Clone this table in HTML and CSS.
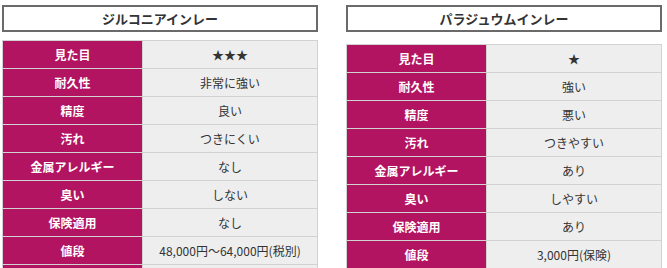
FILE: index.html
```html
<!DOCTYPE html>
<html lang="ja">
<head>
<meta charset="utf-8">
<link rel="stylesheet" href="styles.css">
</head>
<body>
<div class="wrap">
  <section class="col col-left">
    <h2 class="title">ジルコニアインレー</h2>
    <table class="spec">
      <tr><th>見た目</th><td>★★★</td></tr>
      <tr><th>耐久性</th><td>非常に強い</td></tr>
      <tr><th>精度</th><td>良い</td></tr>
      <tr><th>汚れ</th><td>つきにくい</td></tr>
      <tr><th>金属アレルギー</th><td>なし</td></tr>
      <tr><th>臭い</th><td>しない</td></tr>
      <tr><th>保険適用</th><td>なし</td></tr>
      <tr><th>値段</th><td>48,000円～64,000円(税別)</td></tr>
      <tr><th>&nbsp;</th><td>&nbsp;</td></tr>
    </table>
  </section>
  <section class="col col-right">
    <h2 class="title">パラジュウムインレー</h2>
    <table class="spec">
      <tr><th>見た目</th><td>★</td></tr>
      <tr><th>耐久性</th><td>強い</td></tr>
      <tr><th>精度</th><td>悪い</td></tr>
      <tr><th>汚れ</th><td>つきやすい</td></tr>
      <tr><th>金属アレルギー</th><td>あり</td></tr>
      <tr><th>臭い</th><td>しやすい</td></tr>
      <tr><th>保険適用</th><td>あり</td></tr>
      <tr><th>値段</th><td>3,000円(保険)</td></tr>
      <tr><th>&nbsp;</th><td>&nbsp;</td></tr>
    </table>
  </section>
</div>
</body>
</html>
```

FILE: styles.css
```css
html, body {
  margin: 0;
  padding: 0;
  background: #ffffff;
  overflow: hidden;
}
body {
  font-family: "Noto Sans CJK JP", "Noto Sans", sans-serif;
  color: #333333;
}
.wrap {
  display: flex;
  gap: 28px;
  padding: 5px 0 0 2px;
}
.col {
  width: 316px;
}
.title {
  box-sizing: border-box;
  margin: 0;
  height: 27px;
  border: 2px solid #6a6a6a;
  font-size: 13px;
  font-weight: bold;
  line-height: 23px;
  text-align: center;
  color: #333333;
}
.spec {
  width: 316px;
  border-collapse: collapse;
  table-layout: fixed;
  margin-top: 8px;
}
.col-right .spec {
  margin-top: 12px;
}
.spec th,
.spec td {
  box-sizing: border-box;
  height: 28px;
  padding: 0;
  border: 1px solid #d2d2d2;
  text-align: center;
  vertical-align: middle;
  font-size: 12px;
  line-height: 16px;
}
.spec th {
  width: 140px;
  background: #b31462;
  color: #ffffff;
  font-weight: bold;
}
.spec td {
  background: #eeeeee;
  color: #333333;
  font-weight: normal;
}
```
